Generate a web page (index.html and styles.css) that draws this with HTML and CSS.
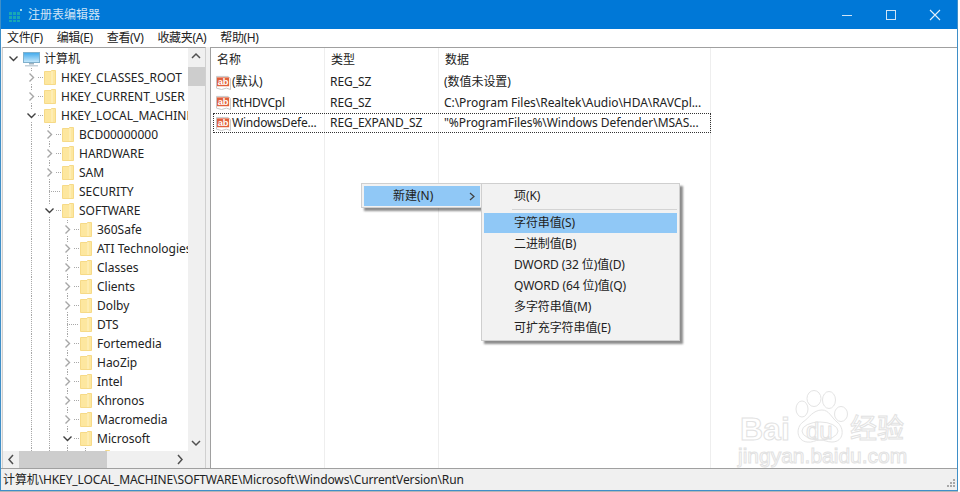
FILE: index.html
```html
<!DOCTYPE html>
<html lang="zh-CN">
<head>
<meta charset="utf-8">
<title>注册表编辑器</title>
<link rel="stylesheet" href="styles.css">
</head>
<body>
<svg class="defs" width="0" height="0" aria-hidden="true">
  <defs>
    <linearGradient id="screen" x1="0" y1="0" x2="0" y2="1"><stop offset="0" stop-color="#3fa9ec"/><stop offset="1" stop-color="#c9e9fb"/></linearGradient>
    <symbol id="folder" viewBox="0 0 12 15">
      <path d="M0.5 1.5H7.5V0.5H11.5V14.5H0.5Z" fill="#fde79f" stroke="#f6da88" stroke-width="1"/>
      <path d="M8 1V14" stroke="#fff3c8" stroke-width="1"/>
    </symbol>
    <symbol id="chev-r" viewBox="0 0 11 11">
      <path d="M3.5 1.5L7.5 5.5L3.5 9.5" fill="none" stroke="#a6a6a6" stroke-width="1.4"/>
    </symbol>
    <symbol id="chev-d" viewBox="0 0 11 11">
      <path d="M1.5 3.5L5.5 7.5L9.5 3.5" fill="none" stroke="#404040" stroke-width="1.4"/>
    </symbol>
    <symbol id="ab" viewBox="0 0 16 16">
      <path d="M0.5 1.5H13L15.5 4V15.5L11 14L6 15.5L0.5 14Z" fill="#fff" stroke="#c4c4c4"/>
      <rect x="1" y="2.5" width="13" height="9.5" fill="#e0603c"/>
      <text x="7.5" y="10.5" text-anchor="middle" fill="#ffffff" font-family="Liberation Sans" font-weight="700" font-size="10">ab</text>
    </symbol>
  </defs>
</svg>

<div class="window">
  <header class="titlebar">
    <svg class="app-icon" width="14" height="14" viewBox="0 0 14 14">
      <g fill="#19a7b5"><rect x="0" y="4" width="3" height="3"/><rect x="4" y="4" width="3" height="3"/><rect x="8" y="4" width="3" height="3"/><rect x="0" y="8" width="3" height="3"/><rect x="4" y="8" width="3" height="3"/><rect x="8" y="8" width="3" height="3"/><rect x="0" y="12" width="3" height="2"/><rect x="4" y="12" width="3" height="2"/><rect x="8" y="12" width="3" height="2"/></g>
      <rect x="11" y="1" width="2" height="2" fill="#9fd6e8"/>
    </svg>
    <span class="title">注册表编辑器</span>
    <div class="controls">
      <span class="ctl"><svg width="12" height="12" viewBox="0 0 12 12"><path d="M1 6.5H11" stroke="#cfe4f6"/></svg></span>
      <span class="ctl"><svg width="12" height="12" viewBox="0 0 12 12"><rect x="1.5" y="1.5" width="9" height="9" fill="none" stroke="#cfe4f6"/></svg></span>
      <span class="ctl"><svg width="12" height="12" viewBox="0 0 12 12"><path d="M1 1L11 11M11 1L1 11" stroke="#e4f0fa" stroke-width="1.1"/></svg></span>
    </div>
  </header>

  <nav class="menubar">
    <span>文件(F)</span><span>编辑(E)</span><span>查看(V)</span><span>收藏夹(A)</span><span>帮助(H)</span>
  </nav>

  <main class="panes">
    <section class="tree-pane">
      <div class="tree-top">
        <div class="tree">
          <div class="row"><span class="exp"><svg class="chev" width="11" height="11"><use href="#chev-d"/></svg></span>
            <svg class="pc" width="17" height="16" viewBox="0 0 17 16"><rect x="0.5" y="1.5" width="16" height="10" fill="url(#screen)" stroke="#7fb0cc"/><path d="M6 12H11V13.5H6Z" fill="#9fb2bf"/><path d="M2 14H15V15.5H2Z" fill="#c4d0d8"/></svg>
            <span class="lbl pc-lbl">计算机</span></div>

          <div class="row"><span class="g"></span><span class="exp ln"><svg class="chev" width="11" height="11"><use href="#chev-r"/></svg><i class="dash"></i></span><svg class="fd" width="12" height="15"><use href="#folder"/></svg><span class="lbl">HKEY_CLASSES_ROOT</span></div>
          <div class="row"><span class="g"></span><span class="exp ln"><svg class="chev" width="11" height="11"><use href="#chev-r"/></svg><i class="dash"></i></span><svg class="fd" width="12" height="15"><use href="#folder"/></svg><span class="lbl">HKEY_CURRENT_USER</span></div>
          <div class="row"><span class="g"></span><span class="exp ln"><svg class="chev" width="11" height="11"><use href="#chev-d"/></svg><i class="dash"></i></span><svg class="fd" width="12" height="15"><use href="#folder"/></svg><span class="lbl">HKEY_LOCAL_MACHINE</span></div>

          <div class="row"><span class="g"></span><span class="g ln"></span><span class="exp ln"><svg class="chev" width="11" height="11"><use href="#chev-r"/></svg><i class="dash"></i></span><svg class="fd" width="12" height="15"><use href="#folder"/></svg><span class="lbl">BCD00000000</span></div>
          <div class="row"><span class="g"></span><span class="g ln"></span><span class="exp ln"><svg class="chev" width="11" height="11"><use href="#chev-r"/></svg><i class="dash"></i></span><svg class="fd" width="12" height="15"><use href="#folder"/></svg><span class="lbl">HARDWARE</span></div>
          <div class="row"><span class="g"></span><span class="g ln"></span><span class="exp ln"><svg class="chev" width="11" height="11"><use href="#chev-r"/></svg><i class="dash"></i></span><svg class="fd" width="12" height="15"><use href="#folder"/></svg><span class="lbl">SAM</span></div>
          <div class="row"><span class="g"></span><span class="g ln"></span><span class="exp ln"><i class="dash long"></i></span><svg class="fd" width="12" height="15"><use href="#folder"/></svg><span class="lbl">SECURITY</span></div>
          <div class="row"><span class="g"></span><span class="g ln"></span><span class="exp ln"><svg class="chev" width="11" height="11"><use href="#chev-d"/></svg><i class="dash"></i></span><svg class="fd" width="12" height="15"><use href="#folder"/></svg><span class="lbl">SOFTWARE</span></div>

          <div class="row"><span class="g"></span><span class="g ln"></span><span class="g ln"></span><span class="exp ln"><svg class="chev" width="11" height="11"><use href="#chev-r"/></svg><i class="dash"></i></span><svg class="fd" width="12" height="15"><use href="#folder"/></svg><span class="lbl">360Safe</span></div>
          <div class="row"><span class="g"></span><span class="g ln"></span><span class="g ln"></span><span class="exp ln"><svg class="chev" width="11" height="11"><use href="#chev-r"/></svg><i class="dash"></i></span><svg class="fd" width="12" height="15"><use href="#folder"/></svg><span class="lbl">ATI Technologies</span></div>
          <div class="row"><span class="g"></span><span class="g ln"></span><span class="g ln"></span><span class="exp ln"><svg class="chev" width="11" height="11"><use href="#chev-r"/></svg><i class="dash"></i></span><svg class="fd" width="12" height="15"><use href="#folder"/></svg><span class="lbl">Classes</span></div>
          <div class="row"><span class="g"></span><span class="g ln"></span><span class="g ln"></span><span class="exp ln"><svg class="chev" width="11" height="11"><use href="#chev-r"/></svg><i class="dash"></i></span><svg class="fd" width="12" height="15"><use href="#folder"/></svg><span class="lbl">Clients</span></div>
          <div class="row"><span class="g"></span><span class="g ln"></span><span class="g ln"></span><span class="exp ln"><svg class="chev" width="11" height="11"><use href="#chev-r"/></svg><i class="dash"></i></span><svg class="fd" width="12" height="15"><use href="#folder"/></svg><span class="lbl">Dolby</span></div>
          <div class="row"><span class="g"></span><span class="g ln"></span><span class="g ln"></span><span class="exp ln"><i class="dash long"></i></span><svg class="fd" width="12" height="15"><use href="#folder"/></svg><span class="lbl">DTS</span></div>
          <div class="row"><span class="g"></span><span class="g ln"></span><span class="g ln"></span><span class="exp ln"><svg class="chev" width="11" height="11"><use href="#chev-r"/></svg><i class="dash"></i></span><svg class="fd" width="12" height="15"><use href="#folder"/></svg><span class="lbl">Fortemedia</span></div>
          <div class="row"><span class="g"></span><span class="g ln"></span><span class="g ln"></span><span class="exp ln"><svg class="chev" width="11" height="11"><use href="#chev-r"/></svg><i class="dash"></i></span><svg class="fd" width="12" height="15"><use href="#folder"/></svg><span class="lbl">HaoZip</span></div>
          <div class="row"><span class="g"></span><span class="g ln"></span><span class="g ln"></span><span class="exp ln"><svg class="chev" width="11" height="11"><use href="#chev-r"/></svg><i class="dash"></i></span><svg class="fd" width="12" height="15"><use href="#folder"/></svg><span class="lbl">Intel</span></div>
          <div class="row"><span class="g"></span><span class="g ln"></span><span class="g ln"></span><span class="exp ln"><svg class="chev" width="11" height="11"><use href="#chev-r"/></svg><i class="dash"></i></span><svg class="fd" width="12" height="15"><use href="#folder"/></svg><span class="lbl">Khronos</span></div>
          <div class="row"><span class="g"></span><span class="g ln"></span><span class="g ln"></span><span class="exp ln"><svg class="chev" width="11" height="11"><use href="#chev-r"/></svg><i class="dash"></i></span><svg class="fd" width="12" height="15"><use href="#folder"/></svg><span class="lbl">Macromedia</span></div>
          <div class="row"><span class="g"></span><span class="g ln"></span><span class="g ln"></span><span class="exp ln"><svg class="chev" width="11" height="11"><use href="#chev-d"/></svg><i class="dash"></i></span><svg class="fd" width="12" height="15"><use href="#folder"/></svg><span class="lbl">Microsoft</span></div>
          <div class="row"><span class="g"></span><span class="g ln"></span><span class="g ln"></span><span class="g ln"></span><span class="exp ln"><i class="dash long"></i></span><svg class="fd" width="12" height="15"><use href="#folder"/></svg></div>
        </div>
        <div class="vscroll">
          <svg class="sb-btn" width="16" height="17" viewBox="0 0 16 17"><path d="M4 10L8 6L12 10" fill="none" stroke="#505050" stroke-width="1.5"/></svg>
          <div class="vtrack"><div class="vthumb"></div></div>
          <svg class="sb-btn" width="16" height="17" viewBox="0 0 16 17"><path d="M4 7L8 11L12 7" fill="none" stroke="#505050" stroke-width="1.5"/></svg>
        </div>
      </div>
      <div class="hscroll">
        <svg class="sb-btn" width="17" height="17" viewBox="0 0 17 17"><path d="M10 4L6 8.5L10 13" fill="none" stroke="#505050" stroke-width="1.5"/></svg>
        <div class="htrack"><div class="hthumb"></div></div>
        <svg class="sb-btn" width="17" height="17" viewBox="0 0 17 17"><path d="M7 4L11 8.5L7 13" fill="none" stroke="#505050" stroke-width="1.5"/></svg>
        <span class="corner"></span>
      </div>
    </section>

    <section class="list-pane">
      <div class="list-row list-head"><span>名称</span><span>类型</span><span>数据</span></div>
      <div class="list-row r1"><span class="name"><svg width="15" height="15"><use href="#ab"/></svg>(默认)</span><span>REG_SZ</span><span>(数值未设置)</span></div>
      <div class="list-row r2"><span class="name"><svg width="15" height="15"><use href="#ab"/></svg>RtHDVCpl</span><span>REG_SZ</span><span>C:\Program Files\Realtek\Audio\HDA\RAVCpl...</span></div>
      <div class="list-row r3 focused"><span class="name"><svg width="15" height="15"><use href="#ab"/></svg>WindowsDefe...</span><span>REG_EXPAND_SZ</span><span>"%ProgramFiles%\Windows Defender\MSAS...</span></div>
    </section>
  </main>

  <footer class="statusbar">
    <span>计算机\HKEY_LOCAL_MACHINE\SOFTWARE\Microsoft\Windows\CurrentVersion\Run</span>
    <svg class="grip" width="8" height="8" viewBox="0 0 8 8"><g fill="#a8a8a8"><rect x="6" y="0" width="2" height="2"/><rect x="3" y="3" width="2" height="2"/><rect x="6" y="3" width="2" height="2"/><rect x="0" y="6" width="2" height="2"/><rect x="3" y="6" width="2" height="2"/><rect x="6" y="6" width="2" height="2"/></g></svg>
  </footer>
</div>

<div class="menu parent-menu">
  <div class="mi active"><span>新建(N)</span><svg width="6" height="9" viewBox="0 0 6 9"><path d="M1 1L5 4.5L1 8" fill="none" stroke="#404040" stroke-width="1.2"/></svg></div>
</div>
<div class="menu sub-menu">
  <div class="si">项(K)</div>
  <div class="sep"></div>
  <div class="si active">字符串值(S)</div>
  <div class="si">二进制值(B)</div>
  <div class="si">DWORD (32 位)值(D)</div>
  <div class="si">QWORD (64 位)值(Q)</div>
  <div class="si">多字符串值(M)</div>
  <div class="si">可扩充字符串值(E)</div>
</div>

<div class="watermark">
  <svg class="paw" width="54" height="54" viewBox="0 0 54 54">
    <g fill="#fff" stroke="#e4e4e4" stroke-width="1">
      <ellipse cx="7" cy="19" rx="6" ry="8"/>
      <ellipse cx="19" cy="8.5" rx="7" ry="8"/>
      <ellipse cx="34" cy="10" rx="6.5" ry="8.5"/>
      <ellipse cx="46" cy="24" rx="6.5" ry="7.5"/>
      <path d="M27 20C34 20 36 27 42 32C50 38 49 52 37 52C32 52 30 50 25 50C20 50 17 53 12 52C2 51 0 38 8 32C14 28 18 20 27 20Z"/>
      <ellipse cx="25" cy="41" rx="18" ry="9"/>
    </g>
  </svg>
  <span class="wm wm-bai">Bai</span>
  <span class="wm wm-du">du</span>
  <span class="wm wm-jy">经验</span>
  <span class="wm wm-url">jingyan.baidu.com</span>
</div>
</body>
</html>
```
FILE: styles.css
```css
* { box-sizing: border-box; }
html, body { margin: 0; padding: 0; }
body {
  width: 960px;
  height: 492px;
  overflow: hidden;
  position: relative;
  background: #fff;
  color: #222;
  font: 12px/16px "Noto Sans", "Noto Sans CJK SC", sans-serif;
}
.defs { position: absolute; }

.window {
  width: 958px;
  height: 491px;
  display: flex;
  flex-direction: column;
  background: #f0f0f0;
  border: 1px solid #3f8fc8;
  border-top: 0;
  box-shadow: 0 1px 0 #b5b5b5;
}

.titlebar {
  height: 29px;
  flex: none;
  display: flex;
  align-items: center;
  background: #0078d7;
  padding-left: 8px;
}
.app-icon { flex: none; }
.title { margin-left: 5px; color: #cfe4f6; }
.controls { margin-left: auto; display: flex; }
.ctl { width: 44px; height: 29px; display: flex; align-items: center; justify-content: center; }

.menubar {
  height: 18px;
  flex: none;
  display: flex;
  align-items: center;
  gap: 14px;
  padding-left: 6px;
  background: #fff;
  color: #222;
  letter-spacing: -0.35px;
}

.panes {
  flex: 1;
  min-height: 0;
  display: flex;
  gap: 4px;
  padding: 0 0 0 1px;
  background: #f0f0f0;
}

.tree-pane {
  width: 204px;
  flex: none;
  display: flex;
  flex-direction: column;
  border-top: 1px solid #a0a0a0;
  border-left: 1px solid #d0d0d0;
  border-right: 1px solid #d0d0d0;
  background: #f0f0f0;
}
.tree-top { flex: 1; min-height: 0; display: flex; }
.tree {
  flex: 1;
  min-width: 0;
  overflow: hidden;
  background: #fff;
  padding-top: 1px;
}
.row {
  height: 19px;
  display: flex;
  align-items: center;
  padding-left: 1px;
  white-space: nowrap;
}
.g, .exp {
  width: 18px;
  height: 19px;
  flex: none;
  position: relative;
  display: flex;
  align-items: center;
  justify-content: center;
}
.ln {
  background: linear-gradient(#a8a8a8 50%, transparent 50%) center top / 1px 2px repeat-y;
}
.chev { background: #fff; position: relative; }
.dash {
  position: absolute;
  left: 16px;
  top: 9px;
  width: 5px;
  height: 1px;
  background: linear-gradient(90deg, #a8a8a8 50%, transparent 50%) left / 2px 1px repeat-x;
}
.dash.long { left: 9px; width: 12px; }
.fd { flex: none; margin-left: 4px; }
.lbl { margin-left: 5px; }
.pc { flex: none; margin-left: 1px; }
.pc-lbl { margin-left: 4px; }

.vscroll {
  width: 17px;
  flex: none;
  display: flex;
  flex-direction: column;
  background: #f0f0f0;
}
.sb-btn { flex: none; display: block; }
.vtrack { flex: 1; }
.vthumb { height: 19px; margin-top: 2px; background: #cdcdcd; }
.hscroll { height: 17px; flex: none; display: flex; background: #f0f0f0; }
.htrack { flex: 1; }
.hthumb { width: 88px; height: 17px; margin-left: -1px; background: #cdcdcd; }
.corner { width: 17px; flex: none; }

.list-pane {
  flex: 1;
  min-width: 0;
  position: relative;
  border-top: 1px solid #a0a0a0;
  border-left: 1px solid #a0a0a0;
  background:
    linear-gradient(#eeeeee, #eeeeee) 113px 0 / 1px 100% no-repeat,
    linear-gradient(#eeeeee, #eeeeee) 227px 0 / 1px 100% no-repeat,
    linear-gradient(#eeeeee, #eeeeee) 499px 0 / 1px 100% no-repeat,
    #fff;
}
.list-row {
  display: grid;
  grid-template-columns: 114px 114px 272px;
  height: 20px;
  align-items: center;
  white-space: nowrap;
  letter-spacing: -0.05px;
}
.list-row > span { padding-left: 5px; overflow: hidden; }
.list-head { height: 23px; margin-bottom: 1px; }
.list-head > span { padding-left: 6px; }
.list-row .name { padding-left: 5px; display: flex; align-items: center; gap: 1px; letter-spacing: -0.2px; }
.name svg { flex: none; }
.r2 { height: 21px; }
.focused {
  width: 498px;
  margin-left: 2px;
  height: 20px;
  outline: 1px dotted #333;
  outline-offset: -1px;
  grid-template-columns: 112px 114px 272px;
}
.focused .name { padding-left: 3px; }

.statusbar {
  height: 22px;
  flex: none;
  display: flex;
  align-items: center;
  padding-left: 2px;
  background: #f0f0f0;
  border-top: 1px solid #a0a0a0;
  position: relative;
  letter-spacing: -0.11px;
}
.grip { position: absolute; right: 2px; bottom: 3px; }

.menu {
  position: absolute;
  background: #f2f2f2;
  border: 1px solid #cfcfcf;
  box-shadow: 3px 3px 2px rgba(0,0,0,.45);
  color: #222;
}
.parent-menu { left: 361px; top: 183px; width: 121px; height: 25px; padding: 2px 1px 2px 2px; }
.mi { height: 20px; display: flex; align-items: center; justify-content: space-between; padding: 0 5px 0 29px; }
.active { background: #90c8f6; }
.sub-menu { left: 481px; top: 183px; width: 199px; height: 158px; padding: 2px; letter-spacing: -0.1px; }
.si { height: 21px; line-height: 21px; padding-left: 30px; white-space: nowrap; }
.sub-menu .si:first-child { height: 20px; line-height: 20px; }
.sep { height: 1px; background: #d4d4d4; margin: 3px 0 3px 28px; }
.si.active { height: 20px; line-height: 20px; }

.watermark { position: absolute; left: 736px; top: 388px; width: 200px; height: 90px; pointer-events: none; }
.paw { position: absolute; left: 59px; top: 2px; }
.wm {
  position: absolute;
  color: #fff;
  -webkit-text-stroke: 1px #e2e2e2;
  font-family: "Liberation Sans", "Noto Sans CJK SC", sans-serif;
  white-space: nowrap;
}
.wm-bai { left: 4px; top: 22px; font-size: 32px; line-height: 38px; font-weight: 700; }
.wm-du { left: 70px; top: 29px; font-size: 24px; line-height: 28px; }
.wm-jy { left: 114px; top: 26px; font-size: 27px; line-height: 30px; }
.wm-url { left: 2px; top: 55px; font-size: 21px; line-height: 26px; }
```
